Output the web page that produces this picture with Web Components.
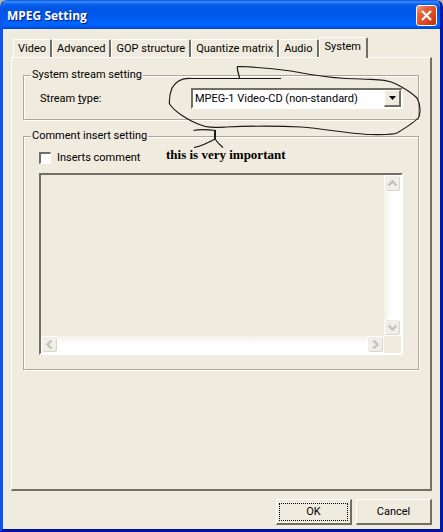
<!DOCTYPE html>
<html lang="en">
<head>
<meta charset="utf-8">
<title>MPEG Setting</title>
<style>
	html, body {
		height: 100%;
	}

	body {
		margin: 0;
		background: #b5b3a6;
		color: #000;
		font: 11px/14px Roboto, "Liberation Sans", Arial, sans-serif;
		--face: #efebde;
		--shade: #aca899;
		--dark: #716f64;
	}
</style>
</head>
<body>

<dialog-window heading="MPEG Setting">
	<tab-panel tabs="Video,Advanced,GOP structure,Quantize matrix,Audio,System" selected="System">
		<group-box legend="System stream setting">
			<select-field></select-field>
		</group-box>
		<group-box legend="Comment insert setting" class="comment">
			<check-field>Inserts comment</check-field>
			<comment-area></comment-area>
		</group-box>
		<hand-note>this is very important</hand-note>
	</tab-panel>
	<push-button slot="actions" focused>OK</push-button>
	<push-button slot="actions">Cancel</push-button>
</dialog-window>

<script>
function template(html) {
	const element = document.createElement("template");
	element.innerHTML = html;
	return element;
}

class BaseElement extends HTMLElement {
	connectedCallback() {
		if (this.shadowRoot) return;
		const root = this.attachShadow({ mode: "open" });
		root.appendChild(this.constructor.template.content.cloneNode(true));
		this.render(root);
	}

	render() {}
}

class DialogWindow extends BaseElement {
	static template = template(`
		<style>
			:host {
				display: flex;
				flex-direction: column;
				box-sizing: border-box;
				min-height: 100%;
				border: solid #0a3be0;
				border-width: 0 3px 3px;
				border-color: #0831d9 #0018b0 #0012a4 #0d55ea;
				border-radius: 7px 7px 0 0;
				background: var(--face);
				overflow: hidden;
			}

			header {
				display: flex;
				align-items: center;
				justify-content: space-between;
				box-sizing: border-box;
				height: 29px;
				padding: 2px 3px 0 4px;
				background: linear-gradient(#0a52d8 0, #3a8cff 2px, #0a62ec 4px, #0054e3 8px, #0058ea 16px, #0066ff 23px, #0061fc 26px, #0040c8 29px);
			}

			h1 {
				margin: 0;
				color: #fff;
				font: bold 12px/18px "Open Sans", "Noto Sans", sans-serif;
				text-shadow: 1px 1px 1px #0a1883;
			}

			header button {
				display: flex;
				box-sizing: border-box;
				width: 21px;
				height: 21px;
				padding: 0;
				border: 1px solid #fff;
				border-radius: 3px;
				background: linear-gradient(135deg, #f0a088 0, #e2603c 30%, #d94420 70%, #b52c0c);
			}

			main {
				display: flex;
				flex: 1;
				padding: 8px 8px 0;
			}

			footer {
				display: flex;
				justify-content: flex-end;
				gap: 4px;
				padding: 8px 8px 4px;
			}
		</style>
		<header>
			<h1></h1>
			<button type="button" aria-label="Close">
				<svg width="19" height="19" viewBox="0 0 19 19"><path d="M5 5l9 9M14 5l-9 9" stroke="#fff" stroke-width="2.2" fill="none"/></svg>
			</button>
		</header>
		<main><slot></slot></main>
		<footer><slot name="actions"></slot></footer>
	`);

	render(root) {
		root.querySelector("h1").textContent = this.getAttribute("heading");
	}
}

class TabPanel extends BaseElement {
	static template = template(`
		<style>
			:host {
				display: flex;
				flex: 1;
				flex-direction: column;
				min-width: 0;
			}

			[role=tablist] {
				display: flex;
				align-items: flex-end;
				height: 20px;
				padding: 0 2px;
			}

			[role=tab] {
				box-sizing: border-box;
				height: 18px;
				padding: 0 4px;
				border: solid;
				border-width: 1px 2px 0 1px;
				border-color: #fff var(--dark) #fff #fff;
				border-radius: 2px 2px 0 0;
				background: var(--face);
				color: inherit;
				font: inherit;
				white-space: nowrap;
			}

			[role=tab][aria-selected=true] {
				z-index: 1;
				height: 21px;
				margin-bottom: -1px;
				padding: 0 5px 3px;
			}

			[role=tabpanel] {
				position: relative;
				display: flex;
				flex: 1;
				flex-direction: column;
				gap: 9px;
				padding: 10px 11px;
				border: solid;
				border-width: 1px 2px 2px 1px;
				border-color: #fff var(--dark) var(--dark) #fff;
			}
		</style>
		<div role="tablist"></div>
		<div role="tabpanel"><slot></slot></div>
	`);

	render(root) {
		const list = root.querySelector("[role=tablist]");
		for (const name of this.getAttribute("tabs").split(",")) {
			const tab = document.createElement("button");
			tab.type = "button";
			tab.textContent = name;
			tab.setAttribute("role", "tab");
			tab.setAttribute("aria-selected", name === this.getAttribute("selected"));
			list.appendChild(tab);
		}
	}
}

class GroupBox extends BaseElement {
	static template = template(`
		<style>
			:host {
				display: block;
			}

			fieldset {
				min-width: 0;
				margin: 0;
				padding: 6px 15px 10px;
				border: 1px solid var(--shade);
				box-shadow: 1px 1px 0 #fff, inset 1px 1px 0 #fff;
			}

			:host(.comment) fieldset {
				padding-top: 8px;
				padding-bottom: 14px;
			}

			legend {
				margin-left: -8px;
				padding: 0 1px;
				background: var(--face);
			}
		</style>
		<fieldset>
			<legend></legend>
			<slot></slot>
		</fieldset>
	`);

	render(root) {
		root.querySelector("legend").textContent = this.getAttribute("legend");
	}
}

class SelectField extends BaseElement {
	static template = template(`
		<style>
			:host {
				display: flex;
				align-items: center;
			}

			label {
				width: 152px;
				text-indent: 1px;
			}

			.box {
				display: flex;
				flex: 1;
				box-sizing: border-box;
				min-width: 0;
				height: 21px;
				border: 2px solid;
				border-color: var(--dark) #fff #fff var(--dark);
				background: #fff;
			}

			select {
				appearance: none;
				flex: 1;
				min-width: 0;
				padding: 0 2px;
				border: 0;
				background: #fff;
				color: inherit;
				font: inherit;
			}

			.arrow {
				display: grid;
				place-items: center;
				box-sizing: border-box;
				width: 17px;
				border: solid;
				border-width: 1px 2px 2px 1px;
				border-color: #fff var(--dark) var(--dark) #fff;
				background: var(--face);
				pointer-events: none;
			}
		</style>
		<label for="type">Stream <u>t</u>ype:</label>
		<div class="box">
			<select id="type"><option>MPEG-1 Video-CD (non-standard)</option></select>
			<span class="arrow"><svg width="7" height="4" viewBox="0 0 7 4"><path d="M0 0h7L3.5 4z"/></svg></span>
		</div>
	`);
}

class CheckField extends BaseElement {
	static template = template(`
		<style>
			:host {
				display: block;
			}

			label {
				display: flex;
				align-items: center;
				gap: 6px;
			}

			input {
				appearance: none;
				box-sizing: border-box;
				width: 12px;
				height: 12px;
				margin: 0;
				border: solid;
				border-width: 2px 1px 1px 2px;
				border-color: var(--dark) #fff #fff var(--dark);
				background: #fff;
			}
		</style>
		<label><input type="checkbox"><slot></slot></label>
	`);
}

class CommentArea extends BaseElement {
	static template = template(`
		<style>
			:host {
				display: grid;
				grid-template: 1fr 17px / 1fr 17px;
				box-sizing: border-box;
				height: 182px;
				margin-top: 8px;
				border: 2px solid;
				border-color: var(--dark) #fff #fff var(--dark);
			}

			textarea {
				box-sizing: border-box;
				width: 100%;
				height: 100%;
				border: 0;
				background: var(--face);
				font: inherit;
				resize: none;
			}

			.bar {
				display: flex;
				justify-content: space-between;
				background: linear-gradient(90deg, #f3f1ea, #fff 50%, #fefefb);
			}

			.vertical {
				flex-direction: column;
			}

			.horizontal {
				background: linear-gradient(#f3f1ea, #fff 50%, #fefefb);
			}

			.bar span {
				box-sizing: border-box;
				width: 17px;
				height: 17px;
				border: 1px solid #fff;
				border-radius: 3px;
				background: #efeee8;
				box-shadow: inset -1px -1px 0 #d9d6c9;
			}

			svg {
				display: block;
				fill: none;
				stroke: #c5c2b8;
				stroke-width: 2.4;
			}
		</style>
		<textarea disabled aria-label="Comment"></textarea>
		<div class="bar vertical">
			<span><svg viewBox="0 0 15 15"><path d="M3.5 9.5l4-4 4 4"/></svg></span>
			<span><svg viewBox="0 0 15 15"><path d="M3.5 5.5l4 4 4-4"/></svg></span>
		</div>
		<div class="bar horizontal">
			<span><svg viewBox="0 0 15 15"><path d="M9.5 3.5l-4 4 4 4"/></svg></span>
			<span><svg viewBox="0 0 15 15"><path d="M5.5 3.5l4 4-4 4"/></svg></span>
		</div>
	`);
}

class PushButton extends BaseElement {
	static template = template(`
		<style>
			:host {
				display: block;
			}

			button {
				display: block;
				box-sizing: border-box;
				width: 76px;
				height: 26px;
				padding: 2px;
				border: solid;
				border-width: 1px 2px 2px 1px;
				border-color: #fff var(--dark) var(--dark) #fff;
				background: var(--face);
				color: inherit;
				font: inherit;
			}

			span {
				display: block;
				padding: 1px;
				border: 1px solid transparent;
			}

			:host([focused]) span {
				border: 1px dotted #000;
			}
		</style>
		<button type="button"><span><slot></slot></span></button>
	`);
}

// Pen marks laid over the stream type field, pinned to the right of the panel
class HandNote extends BaseElement {
	static template = template(`
		<style>
			:host {
				position: absolute;
				top: 8px;
				right: 8px;
				width: 260px;
				pointer-events: none;
				font: bold 13px/14px "Liberation Serif", "Times New Roman", serif;
			}

			svg {
				display: block;
				fill: none;
				stroke: #1c1a18;
				stroke-width: 1.2;
			}

			div {
				padding-left: 4px;
			}
		</style>
		<svg width="260" height="82" viewBox="161 66 260 82">
			<path d="M280 78.500H190C181 78 175 81 171 88C169 93 168 98 168.500 104C174 112 187 120 197 124C206 128 213 127.500 225 127C250 126 280 126 300 127C325 129 350 134 370 134.500C382 134.500 391 135 396 133C406 127 414 122 418 117C420 109 419 103 416 98C412 94 403 88 395 84C385 79 375 80 360 79C330 79 305 74 290 71C268 68 255 67 236.500 66.500C235.500 70 238 74 238.500 78"/>
			<path d="M192.500 130.500C198 129 207 129.500 215 130.500"/>
			<path d="M214 130v9" stroke-width="2"/>
			<path d="M214 139C207 143 200 146 193 147.500M214 139C216 142 219 145 222 147.500"/>
		</svg>
		<div><slot></slot></div>
	`);
}

customElements.define("dialog-window", DialogWindow);
customElements.define("tab-panel", TabPanel);
customElements.define("group-box", GroupBox);
customElements.define("select-field", SelectField);
customElements.define("check-field", CheckField);
customElements.define("comment-area", CommentArea);
customElements.define("push-button", PushButton);
customElements.define("hand-note", HandNote);
</script>
</body>
</html>
